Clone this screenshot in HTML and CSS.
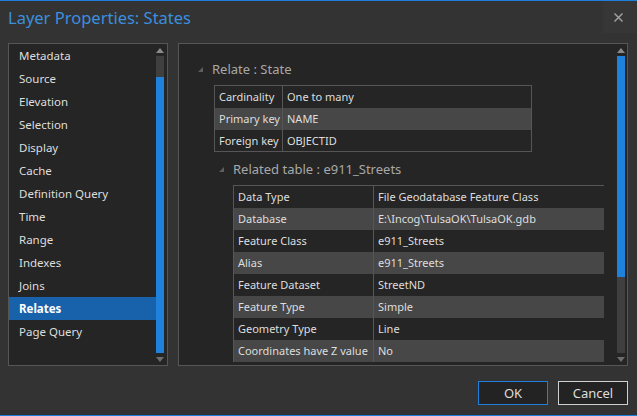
FILE: index.html
```html
<!DOCTYPE html>
<html lang="en">
<head>
  <meta charset="UTF-8">
  <title>Layer Properties: States</title>
  <link rel="stylesheet" href="styles.css">
</head>
<body>
  <div class="window">
    <div class="titlebar">
      <span class="title">Layer Properties: States</span>
      <div class="close">
        <svg width="9" height="9" viewBox="0 0 9 9"><path d="M0.5 0.5 L8.5 8.5 M8.5 0.5 L0.5 8.5" stroke="#a3a3a3" stroke-width="1.4"/></svg>
      </div>
    </div>

    <div class="main">
      <!-- Page list -->
      <div class="panel sidebar">
        <ul class="pages">
          <li>Metadata</li>
          <li>Source</li>
          <li>Elevation</li>
          <li>Selection</li>
          <li>Display</li>
          <li>Cache</li>
          <li>Definition Query</li>
          <li>Time</li>
          <li>Range</li>
          <li>Indexes</li>
          <li>Joins</li>
          <li class="active">Relates</li>
          <li>Page Query</li>
        </ul>
        <div class="vscroll left-scroll">
          <div class="arrow up"></div>
          <div class="track">
            <div class="gap"></div>
            <div class="thumb"></div>
          </div>
          <div class="arrow down"></div>
        </div>
      </div>

      <!-- Relate details -->
      <div class="panel content">
        <div class="scroll-area">
          <div class="node">
            <div class="heading"><span class="expander"></span>Relate : State</div>
            <table class="props relate-table">
              <tr><td class="key">Cardinality</td><td>One to many</td></tr>
              <tr class="alt"><td class="key">Primary key</td><td>NAME</td></tr>
              <tr><td class="key">Foreign key</td><td>OBJECTID</td></tr>
            </table>
            <div class="node child">
              <div class="heading"><span class="expander"></span>Related table : e911_Streets</div>
              <table class="props table-info">
                <tr><td class="key">Data Type</td><td>File Geodatabase Feature Class</td></tr>
                <tr class="alt"><td class="key">Database</td><td>E:\Incog\TulsaOK\TulsaOK.gdb</td></tr>
                <tr><td class="key">Feature Class</td><td>e911_Streets</td></tr>
                <tr class="alt"><td class="key">Alias</td><td>e911_Streets</td></tr>
                <tr><td class="key">Feature Dataset</td><td>StreetND</td></tr>
                <tr class="alt"><td class="key">Feature Type</td><td>Simple</td></tr>
                <tr><td class="key">Geometry Type</td><td>Line</td></tr>
                <tr class="alt"><td class="key">Coordinates have Z value</td><td>No</td></tr>
              </table>
            </div>
          </div>
        </div>
        <div class="vscroll right-scroll">
          <div class="arrow up"></div>
          <div class="track">
            <div class="thumb"></div>
            <div class="gap"></div>
          </div>
          <div class="arrow down"></div>
        </div>
      </div>
    </div>

    <div class="footer">
      <button class="btn primary">OK</button>
      <button class="btn">Cancel</button>
    </div>
  </div>
</body>
</html>
```

FILE: styles.css
```css
* {
  margin: 0;
  padding: 0;
  box-sizing: border-box;
}

body {
  background-color: #333333;
  font-family: 'Noto Sans', 'Open Sans', sans-serif;
  font-size: 11.5px;
  color: #dedede;
}

.window {
  width: 637px;
  height: 416px;
  border-top: 1px solid #1c80dc;
  border-bottom: 1px solid #1c80dc;
  display: flex;
  flex-direction: column;
  overflow: hidden;
}

/* Title bar */
.titlebar {
  height: 42px;
  display: flex;
  justify-content: space-between;
  align-items: flex-start;
  padding-left: 8px;
}

.title {
  color: #3a8fde;
  font-size: 16.5px;
  line-height: 20px;
  margin-top: 7px;
}

.close {
  width: 34px;
  height: 32px;
  background-color: #363636;
  display: flex;
  align-items: center;
  justify-content: center;
  padding-right: 4px;
}

/* Panels */
.main {
  display: flex;
  gap: 10px;
  padding: 0 9px 0 8px;
  height: 323px;
}

.panel {
  border: 1px solid #565656;
  background-color: #252525;
  display: flex;
  height: 100%;
}

.sidebar {
  width: 160px;
}

.content {
  width: 450px;
}

.pages {
  list-style: none;
  width: 147px;
}

.pages li {
  height: 23px;
  line-height: 23px;
  padding-left: 10px;
  white-space: nowrap;
}

.pages li.active {
  background-color: #1762ab;
  color: #ffffff;
  font-weight: bold;
}

/* Scroll bars */
.vscroll {
  width: 8px;
  display: flex;
  flex-direction: column;
}

.left-scroll {
  margin-right: 3px;
}

.right-scroll {
  margin-right: 2px;
  margin-left: 13px;
}

.arrow {
  height: 12px;
  display: flex;
  justify-content: center;
  align-items: center;
}

.arrow.up::before {
  content: '';
  border-style: solid;
  border-width: 0 4px 5px 4px;
  border-color: transparent transparent #8a8a8a transparent;
}

.arrow.down::before {
  content: '';
  border-style: solid;
  border-width: 5px 4px 0 4px;
  border-color: #6e6e6e transparent transparent transparent;
}

.track {
  flex: 1;
  display: flex;
  flex-direction: column;
  background-color: #3f3f3f;
}

.thumb {
  background-color: #1e82dc;
}

.left-scroll .gap {
  height: 21px;
}

.left-scroll .thumb {
  flex: 1;
}

.right-scroll .thumb {
  height: 221px;
}

.right-scroll .gap {
  flex: 1;
}

/* Relate tree */
.scroll-area {
  flex: 1;
  overflow: hidden;
  padding: 15px 0 0 19px;
}

.heading {
  height: 20px;
  line-height: 20px;
  font-size: 13px;
  color: #a8a8a8;
  display: flex;
  align-items: center;
  white-space: nowrap;
}

.expander {
  width: 0;
  height: 0;
  border-style: solid;
  border-width: 0 0 5px 5px;
  border-color: transparent transparent #5e5e5e transparent;
  margin-right: 9px;
  margin-top: 1px;
}

.props {
  border-collapse: collapse;
  table-layout: fixed;
  margin: 6px 0 0 16px;
  white-space: nowrap;
  font-size: 11px;
}

.props td {
  height: 22px;
  padding: 0 5px 0 4px;
  border-left: 1px solid #565656;
  overflow: hidden;
}

.props tr.alt td {
  background-color: #474747;
}

.relate-table {
  width: 318px;
  border: 1px solid #565656;
}

.relate-table td.key {
  width: 68px;
}

.child {
  margin: 7px 0 0 21px;
}

.table-info {
  width: 420px;
  margin-left: 14px;
  border-top: 1px solid #565656;
}

.table-info td.key {
  width: 140px;
}

/* Footer buttons */
.footer {
  display: flex;
  justify-content: flex-end;
  gap: 10px;
  padding: 15px 9px 0 0;
}

.btn {
  width: 70px;
  height: 24px;
  background-color: #232323;
  border: 1px solid #cfcfcf;
  color: #dedede;
  font-family: 'Noto Sans', 'Open Sans', sans-serif;
  font-size: 13px;
}

.btn.primary {
  border-color: #1c80dc;
}
```
